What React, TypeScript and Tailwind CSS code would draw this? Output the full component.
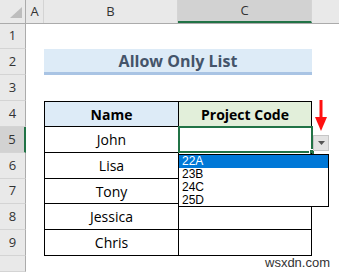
import React from 'react';

const rows = [
  { n: 1, h: 'h-[25px]' },
  { n: 2, h: 'h-[26px]' },
  { n: 3, h: 'h-[26px]' },
  { n: 4, h: 'h-[26px]' },
  { n: 5, h: 'h-[26px]' },
  { n: 6, h: 'h-[26px]' },
  { n: 7, h: 'h-[25px]' },
  { n: 8, h: 'h-[26px]' },
  { n: 9, h: 'h-[26px]' },
];

const names: Record<number, string> = { 5: 'John', 6: 'Lisa', 7: 'Tony', 8: 'Jessica', 9: 'Chris' };
const codes = ['22A', '23B', '24C', '25D'];

function RowHead({ n, active }: { n?: number; active?: boolean }) {
  return (
    <div
      className={`w-[26px] shrink-0 flex items-center justify-center border-b border-[#d4d4d4] text-[13px] text-[#333] ${
        active ? 'bg-[#d2d2d2] border-r-2 border-r-[#217346]' : 'bg-[#e9e9e9] border-r border-r-[#ababab]'
      }`}
    >
      {n}
    </div>
  );
}

function Cells({ n }: { n: number }) {
  if (n === 2) {
    return (
      <div className="w-[268px] h-full bg-[#ddebf7] border-b-[3px] border-[#a9c4e4] flex items-center justify-center font-bold text-[16px] text-[#44546a]">
        Allow Only List
      </div>
    );
  }
  if (n === 4) {
    return (
      <>
        <div className="w-[134px] h-full bg-[#ddebf7] border border-r-0 border-black flex items-center justify-center font-bold text-[14px] text-black">
          Name
        </div>
        <div className="w-[134px] h-full bg-[#e2efda] border border-black flex items-center justify-center font-bold text-[14px] text-black">
          Project Code
        </div>
      </>
    );
  }
  if (n >= 5 && n <= 9) {
    return (
      <>
        <div className="w-[134px] h-full border-l border-b border-black flex items-center justify-center text-[14px] text-black">
          {names[n]}
        </div>
        <div className="relative w-[134px] h-full border-x border-b border-black">
          {n === 5 && (
            <div className="absolute -left-px -top-px w-[135px] h-[27px] border-2 border-[#217346]">
              <div className="absolute -right-[4px] -bottom-[4px] w-[6px] h-[6px] bg-[#217346] border border-white" />
            </div>
          )}
        </div>
      </>
    );
  }
  return <div className="w-[268px] h-full" />;
}

export default function App() {
  return (
    <div className="relative flex flex-col w-[339px] h-[272px] bg-white overflow-hidden font-['Open_Sans',sans-serif]">
      {/* column headers */}
      <div className="flex h-[24px] shrink-0 bg-[#e9e9e9] border-b border-[#ababab] text-[13px] text-[#333]">
        <div className="relative w-[26px] shrink-0 border-r border-[#ababab]">
          <svg className="absolute left-0 top-0" width="26" height="23" viewBox="0 0 26 23">
            <polygon points="10,18 22,18 22,7" fill="#bdbdbd" />
          </svg>
        </div>
        <div className="w-[18px] flex items-center justify-center border-r border-[#d4d4d4]">A</div>
        <div className="w-[134px] flex items-center justify-center border-r border-[#d4d4d4]">B</div>
        <div className="w-[134px] flex items-center justify-center bg-[#d2d2d2] border-b-2 border-[#217346] border-r border-r-[#d4d4d4]">
          C
        </div>
        <div className="flex-1" />
      </div>

      {rows.map((r) => (
        <div key={r.n} className={`flex shrink-0 ${r.h}`}>
          <RowHead n={r.n} active={r.n === 5} />
          <div className="w-[18px] shrink-0" />
          <Cells n={r.n} />
        </div>
      ))}
      <div className="flex flex-1">
        <RowHead />
      </div>

      {/* red arrow */}
      <svg className="absolute left-[314px] top-[99px]" width="14" height="34" viewBox="0 0 14 34">
        <rect x="5.5" y="1" width="3" height="19" fill="#ff1010" />
        <polygon points="1,18 13,18 7,32" fill="#ff1010" />
      </svg>

      {/* dropdown button */}
      <div className="absolute left-[313px] top-[135px] w-[16px] h-[16px] bg-[#e3e3e3] border border-[#c6c6c6] flex items-center justify-center">
        <svg width="7" height="4" viewBox="0 0 7 4">
          <polygon points="0,0 7,0 3.5,4" fill="#555" />
        </svg>
      </div>

      {/* dropdown list */}
      <div className="absolute left-[178px] top-[154px] w-[151px] h-[53px] bg-white border border-black font-['Liberation_Sans',sans-serif] text-[12px] leading-[13px]">
        {codes.map((c, i) => (
          <div key={c} className={`h-[13px] pl-[3px] ${i === 0 ? 'bg-[#0078d7] text-white' : 'text-black'}`}>
            {c}
          </div>
        ))}
      </div>

      {/* watermark */}
      <div className="absolute left-[265px] top-[255px] text-[13px] leading-[16px] text-[#333] font-['Liberation_Sans',sans-serif]">
        wsxdn.com
      </div>
    </div>
  );
}
